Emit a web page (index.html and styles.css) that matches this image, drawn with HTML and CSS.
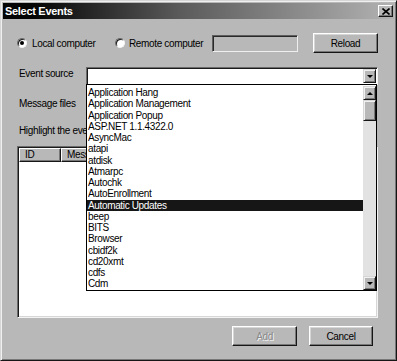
FILE: index.html
```html
<!DOCTYPE html>
<html lang="en">
<head>
  <meta charset="UTF-8">
  <title>Select Events</title>
  <link rel="stylesheet" href="styles.css">
</head>
<body>
  <div class="window">
    <div class="titlebar">
      <span class="title">Select Events</span>
      <span class="close-btn">
        <svg width="8" height="7" viewBox="0 0 8 7"><path d="M0.5 0.5 L7.5 6.5 M7.5 0.5 L0.5 6.5" stroke="#000" stroke-width="1.6"/></svg>
      </span>
    </div>

    <div class="content">
      <div class="row row-computer">
        <label class="radio-opt opt-local"><span class="radio checked"></span>Local computer</label>
        <label class="radio-opt opt-remote"><span class="radio"></span>Remote computer</label>
        <div class="textbox"></div>
        <button class="btn btn-reload">Reload</button>
      </div>

      <div class="row row-source">
        <span class="field-label">Event source</span>
        <div class="combo">
          <span class="arrow-btn"><span class="arrow-down"></span></span>

          <div class="dropdown">
            <ul class="dropdown-items">
              <li>Application Hang</li>
              <li>Application Management</li>
              <li>Application Popup</li>
              <li>ASP.NET 1.1.4322.0</li>
              <li>AsyncMac</li>
              <li>atapi</li>
              <li>atdisk</li>
              <li>Atmarpc</li>
              <li>Autochk</li>
              <li>AutoEnrollment</li>
              <li class="selected">Automatic Updates</li>
              <li>beep</li>
              <li>BITS</li>
              <li>Browser</li>
              <li>cbidf2k</li>
              <li>cd20xmt</li>
              <li>cdfs</li>
              <li>Cdm</li>
            </ul>
            <div class="scrollbar">
              <span class="arrow-btn scroll-btn"><span class="arrow-up"></span></span>
              <div class="track">
                <span class="thumb"></span>
              </div>
              <span class="arrow-btn scroll-btn"><span class="arrow-down"></span></span>
            </div>
          </div>
        </div>
      </div>

      <div class="row row-files">
        <span class="field-label">Message files</span>
      </div>

      <div class="hint">Highlight the events you want to add:</div>

      <div class="listview">
        <div class="lv-header">
          <span class="lv-col col-id">ID</span>
          <span class="lv-col col-msg">Message</span>
        </div>
        <div class="lv-body"></div>
      </div>

      <div class="actions">
        <button class="btn btn-add" disabled>Add</button>
        <button class="btn btn-cancel">Cancel</button>
      </div>
    </div>
  </div>
</body>
</html>
```

FILE: styles.css
```css
:root {
  --face: #b8b8b8;
  --light: #d6d6d6;
  --shadow: #777;
  --dark: #161616;
  --select: #161616;
}

* {
  margin: 0;
  padding: 0;
  box-sizing: border-box;
}

body {
  background: var(--face);
  font-family: "Liberation Sans", Arial, sans-serif;
  font-size: 10px;
  letter-spacing: -0.35px;
  color: #000;
}

.window {
  width: 397px;
  height: 361px;
  display: flex;
  flex-direction: column;
  background: var(--face);
  border: 1px solid;
  border-color: var(--light) var(--dark) var(--dark) var(--light);
  box-shadow: inset 1px 1px #f0f0f0, inset -1px -1px var(--shadow);
  padding: 2px;
}

/* title bar */
.titlebar {
  height: 16px;
  display: flex;
  align-items: center;
  justify-content: space-between;
  padding: 0 1px 0 2px;
  background: linear-gradient(90deg, #050505 8%, #5a5a5a 45%, #b2b2b2 100%);
}

.title {
  color: #fff;
  font-size: 11px;
  font-weight: bold;
  letter-spacing: -0.3px;
}

.close-btn {
  width: 15px;
  height: 12px;
  display: flex;
  align-items: center;
  justify-content: center;
  background: var(--face);
  border: 1px solid;
  border-color: #fff var(--dark) var(--dark) #fff;
  box-shadow: inset -1px -1px var(--shadow);
}

/* body */
.content {
  flex: 1;
  display: flex;
  flex-direction: column;
  padding: 14px 16px 0 14px;
}

.row {
  display: flex;
}

.row-computer {
  height: 20px;
  align-items: center;
}

.radio-opt {
  display: flex;
  align-items: center;
}

.opt-local {
  width: 98px;
}

.opt-remote {
  width: 97px;
}

.radio {
  position: relative;
  width: 10px;
  height: 10px;
  margin-right: 5px;
  border-radius: 50%;
  background: #fff;
  border: 1px solid;
  border-color: #6a6a6a #f4f4f4 #f4f4f4 #6a6a6a;
  box-shadow: inset 1px 1px #1a1a1a;
}

.opt-remote .radio {
  margin-right: 4px;
}

.radio.checked::after {
  content: "";
  position: absolute;
  left: 2px;
  top: 2px;
  width: 4px;
  height: 4px;
  border-radius: 50%;
  background: #000;
}

.textbox {
  width: 86px;
  height: 17px;
  background: var(--face);
  border: 1px solid;
  border-color: #5e5e5e #eee #eee #5e5e5e;
  box-shadow: inset 1px 1px #2a2a2a;
}

.btn {
  height: 20px;
  font-family: inherit;
  font-size: 10px;
  letter-spacing: -0.35px;
  color: #000;
  background: var(--face);
  border: 1px solid;
  border-color: #fff var(--dark) var(--dark) #fff;
  box-shadow: inset -1px -1px var(--shadow), inset 1px 1px var(--light);
}

.btn-reload {
  width: 65px;
  margin-left: 15px;
}

.row-source {
  margin-top: 14px;
}

.field-label {
  width: 67px;
  margin: 1px 0 0 2px;
  line-height: 12px;
}

.combo {
  position: relative;
  width: 292px;
  height: 18px;
  display: flex;
  justify-content: flex-end;
  padding: 1px;
  background: #fff;
  border: 1px solid;
  border-color: #6a6a6a #f4f4f4 #f4f4f4 #6a6a6a;
  box-shadow: inset 1px 1px #1a1a1a;
  z-index: 2;
}

.arrow-btn {
  width: 13px;
  height: 14px;
  display: flex;
  align-items: center;
  justify-content: center;
  background: var(--face);
  border: 1px solid;
  border-color: var(--light) var(--dark) var(--dark) var(--light);
  box-shadow: inset 1px 1px #f0f0f0, inset -1px -1px var(--shadow);
}

.arrow-down,
.arrow-up {
  width: 0;
  height: 0;
  border-left: 3px solid transparent;
  border-right: 3px solid transparent;
}

.arrow-down {
  border-top: 3px solid #000;
}

.arrow-up {
  border-bottom: 3px solid #000;
}

/* open list of the combo */
.dropdown {
  position: absolute;
  left: -1px;
  top: 16px;
  width: 291px;
  height: 207px;
  display: flex;
  background: #fff;
  border: 1px solid #000;
}

.dropdown-items {
  flex: 1;
  list-style: none;
  padding-top: 2px;
}

.dropdown-items li {
  height: 11.25px;
  line-height: 11.25px;
  padding-left: 1px;
  white-space: nowrap;
}

.dropdown-items li.selected {
  background: var(--select);
  color: #fff;
}

.scrollbar {
  width: 13px;
  display: flex;
  flex-direction: column;
  padding-top: 1px;
}

.scroll-btn {
  height: 14px;
}

.track {
  flex: 1;
  background: #e2e2e2;
}

.thumb {
  display: block;
  height: 21px;
  background: var(--face);
  border: 1px solid;
  border-color: var(--light) var(--dark) var(--dark) var(--light);
  box-shadow: inset 1px 1px #f0f0f0, inset -1px -1px var(--shadow);
}

.row-files {
  margin-top: 12px;
}

.hint {
  margin: 15px 0 0 2px;
  line-height: 12px;
  white-space: nowrap;
}

/* events list */
.listview {
  height: 172px;
  margin-top: 9px;
  background: #fff;
  border: 1px solid;
  border-color: #6a6a6a #f4f4f4 #f4f4f4 #6a6a6a;
  box-shadow: inset 1px 1px #1a1a1a, inset -1px -1px var(--light);
  padding: 1px;
}

.lv-header {
  display: flex;
  height: 14px;
}

.lv-col {
  height: 14px;
  line-height: 12px;
  padding-left: 5px;
  background: var(--face);
  border: 1px solid;
  border-color: #fff var(--dark) var(--dark) #fff;
  box-shadow: inset -1px -1px var(--shadow);
}

.col-id {
  width: 42px;
}

.col-msg {
  flex: 1;
}

.actions {
  display: flex;
  justify-content: flex-end;
  gap: 12px;
  margin: 8px 5px 0 0;
}

.btn-add {
  width: 65px;
  color: #8a8a8a;
  text-shadow: 1px 1px #f2f2f2;
}

.btn-cancel {
  width: 64px;
}
```
